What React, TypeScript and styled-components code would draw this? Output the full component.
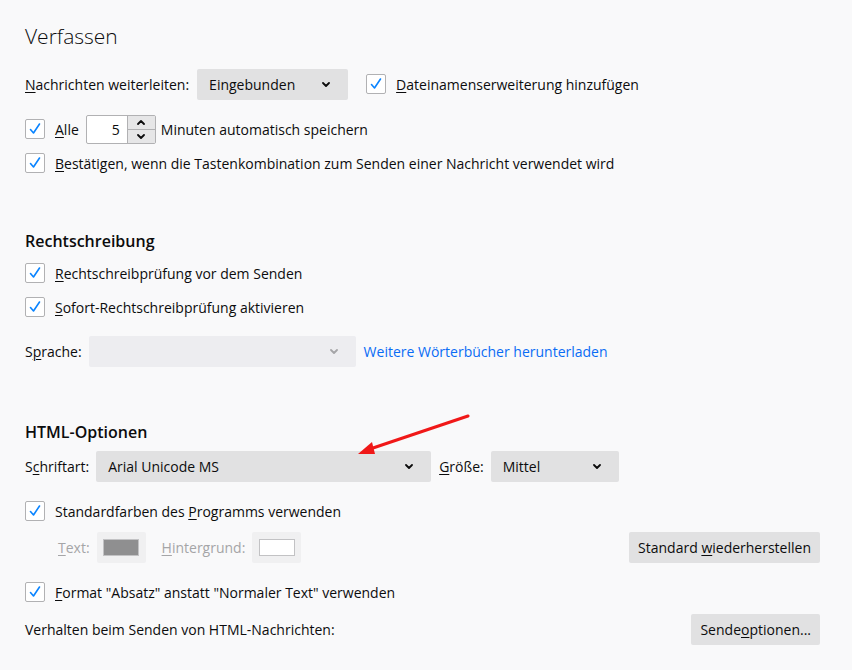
import React from 'react';
import styled, { createGlobalStyle } from 'styled-components';

const GlobalStyle = createGlobalStyle`
  html, body {
    margin: 0;
    padding: 0;
    background: #f9f9fa;
  }
  body {
    font-family: "Open Sans", "Noto Sans", sans-serif;
    font-size: 14px;
    color: #0c0c0d;
  }
`;

const Page = styled.div`
  position: relative;
  width: 852px;
  height: 670px;
  box-sizing: border-box;
  padding: 21px 32px 0 25px;
  overflow: hidden;
`;

const Title = styled.h1`
  margin: 0;
  height: 30px;
  line-height: 30px;
  font-size: 21px;
  font-weight: 300;
`;

const SectionTitle = styled.h2<{ $mt: number }>`
  margin: ${(p) => p.$mt}px 0 0;
  height: 24px;
  line-height: 24px;
  font-size: 16px;
  font-weight: 600;
`;

const Row = styled.div<{ $mt: number; $h?: number; $indent?: number }>`
  display: flex;
  align-items: center;
  margin-top: ${(p) => p.$mt}px;
  height: ${(p) => p.$h ?? 24}px;
  padding-left: ${(p) => p.$indent ?? 0}px;
`;

const Spacer = styled.div`
  flex: 1;
`;

const Label = styled.span<{ $disabled?: boolean; $gap?: number }>`
  white-space: nowrap;
  color: ${(p) => (p.$disabled ? '#a5a5a7' : '#0c0c0d')};
  margin-right: ${(p) => p.$gap ?? 7}px;
`;

const Key = styled.u`
  text-decoration-thickness: 1px;
  text-underline-offset: 2px;
`;

const Box = styled.span`
  display: inline-flex;
  align-items: center;
  justify-content: center;
  width: 20px;
  height: 20px;
  box-sizing: border-box;
  border: 1px solid #b1b1b3;
  border-radius: 2px;
  background: #fff;
  margin-right: 10px;
  flex: none;
`;

const Check = ({ ml = 0 }: { ml?: number }) => (
  <Box style={ml ? { marginLeft: ml } : undefined}>
    <svg width="14" height="14" viewBox="0 0 14 14">
      <path d="M2.5 7.5 L5.5 11 L11.5 2" fill="none" stroke="#0a84ff" strokeWidth="1.6" strokeLinecap="round" strokeLinejoin="round" />
    </svg>
  </Box>
);

const SelectBox = styled.div<{ $w: number; $disabled?: boolean }>`
  display: flex;
  align-items: center;
  box-sizing: border-box;
  width: ${(p) => p.$w}px;
  height: 31px;
  padding: 0 18px 0 12px;
  border-radius: 2px;
  background: ${(p) => (p.$disabled ? '#ededf0' : '#e1e1e2')};
  color: #0c0c0d;
  margin-right: 8px;
  flex: none;
`;

const Chevron = ({ color = '#0c0c0d', up = false }: { color?: string; up?: boolean }) => (
  <svg width="8" height="5" viewBox="0 0 8 5">
    <path
      d={up ? 'M1 4 L4 1 L7 4' : 'M1 1 L4 4 L7 1'}
      fill="none"
      stroke={color}
      strokeWidth="1.8"
      strokeLinecap="round"
      strokeLinejoin="round"
    />
  </svg>
);

const Select = ({ w, value, disabled }: { w: number; value: string; disabled?: boolean }) => (
  <SelectBox $w={w} $disabled={disabled}>
    <span>{value}</span>
    <Spacer />
    <Chevron color={disabled ? '#a5a5a7' : '#0c0c0d'} />
  </SelectBox>
);

const Number = styled.div`
  display: flex;
  box-sizing: border-box;
  width: 70px;
  height: 29px;
  border: 1px solid #b1b1b3;
  border-radius: 2px;
  background: #fff;
  margin-right: 5px;
  flex: none;
`;

const NumberValue = styled.div`
  flex: 1;
  display: flex;
  align-items: center;
  justify-content: flex-end;
  padding-right: 7px;
`;

const Spin = styled.div`
  display: flex;
  flex-direction: column;
  width: 27px;
  border-left: 1px solid #b1b1b3;
`;

const SpinHalf = styled.div<{ $top?: boolean }>`
  flex: 1;
  display: flex;
  align-items: center;
  justify-content: center;
  background: #e6e6e7;
  border-bottom: ${(p) => (p.$top ? '1px solid #b1b1b3' : 'none')};
`;

const Button = styled.div`
  display: flex;
  align-items: center;
  box-sizing: border-box;
  height: 31px;
  padding: 0 9px;
  border-radius: 2px;
  background: #e1e1e2;
  white-space: nowrap;
`;

const Swatch = styled.div`
  display: flex;
  align-items: center;
  justify-content: center;
  width: 49px;
  height: 31px;
  border-radius: 2px;
  background: #f0f0f1;
  margin-right: 16px;
`;

const SwatchFill = styled.div<{ $color: string }>`
  width: 36px;
  height: 17px;
  box-sizing: border-box;
  border: 1px solid #c2c2c4;
  background: ${(p) => p.$color};
`;

const Link = styled.a`
  color: #0a6cf5;
  text-decoration: none;
  white-space: nowrap;
`;

const Arrow = styled.svg`
  position: absolute;
  left: 350px;
  top: 408px;
`;

export default function App() {
  return (
    <Page>
      <GlobalStyle />
      <Title>Verfassen</Title>

      <Row $mt={17} $h={32}>
        <Label $gap={8}><Key>N</Key>achrichten weiterleiten:</Label>
        <Select w={151} value="Eingebunden" />
        <Check ml={10} />
        <Label><Key>D</Key>ateinamenserweiterung hinzufügen</Label>
      </Row>

      <Row $mt={15} $h={28}>
        <Check />
        <Label><Key>A</Key>lle</Label>
        <Number>
          <NumberValue>5</NumberValue>
          <Spin>
            <SpinHalf $top><Chevron up /></SpinHalf>
            <SpinHalf><Chevron /></SpinHalf>
          </Spin>
        </Number>
        <Label>Minuten automatisch speichern</Label>
      </Row>

      <Row $mt={8}>
        <Check />
        <Label><Key>B</Key>estätigen, wenn die Tastenkombination zum Senden einer Nachricht verwendet wird</Label>
      </Row>

      <SectionTitle $mt={54}>Rechtschreibung</SectionTitle>

      <Row $mt={8}>
        <Check />
        <Label><Key>R</Key>echtschreibprüfung vor dem Senden</Label>
      </Row>

      <Row $mt={10}>
        <Check />
        <Label><Key>S</Key>ofort-Rechtschreibprüfung aktivieren</Label>
      </Row>

      <Row $mt={17} $h={31}>
        <Label>S<Key>p</Key>rache:</Label>
        <Select w={267} value="" disabled />
        <Link href="#">Weitere Wörterbücher herunterladen</Link>
      </Row>

      <SectionTitle $mt={53}>HTML-Optionen</SectionTitle>

      <Row $mt={6} $h={32}>
        <Label>S<Key>c</Key>hriftart:</Label>
        <Select w={335} value="Arial Unicode MS" />
        <Label><Key>G</Key>röße:</Label>
        <Select w={128} value="Mittel" />
      </Row>

      <Row $mt={17}>
        <Check />
        <Label>Standardfarben des <Key>P</Key>rogramms verwenden</Label>
      </Row>

      <Row $mt={8} $h={32} $indent={33}>
        <Label $disabled><Key>T</Key>ext:</Label>
        <Swatch><SwatchFill $color="#8f8f90" /></Swatch>
        <Label $disabled><Key>H</Key>intergrund:</Label>
        <Swatch><SwatchFill $color="#ffffff" /></Swatch>
        <Spacer />
        <Button><span>Standard <Key>w</Key>iederherstellen</span></Button>
      </Row>

      <Row $mt={17}>
        <Check />
        <Label><Key>F</Key>ormat "Absatz" anstatt "Normaler Text" verwenden</Label>
      </Row>

      <Row $mt={9} $h={32}>
        <Label>Verhalten beim Senden von HTML-Nachrichten:</Label>
        <Spacer />
        <Button><span>Sende<Key>o</Key>ptionen...</span></Button>
      </Row>

      <Arrow width="130" height="60" viewBox="0 0 130 60">
        <line x1="118" y1="8" x2="20" y2="41" stroke="#f01818" strokeWidth="3" strokeLinecap="round" />
        <path d="M8 46 L22 34 L25 46 Z" fill="#f01818" />
      </Arrow>
    </Page>
  );
}
